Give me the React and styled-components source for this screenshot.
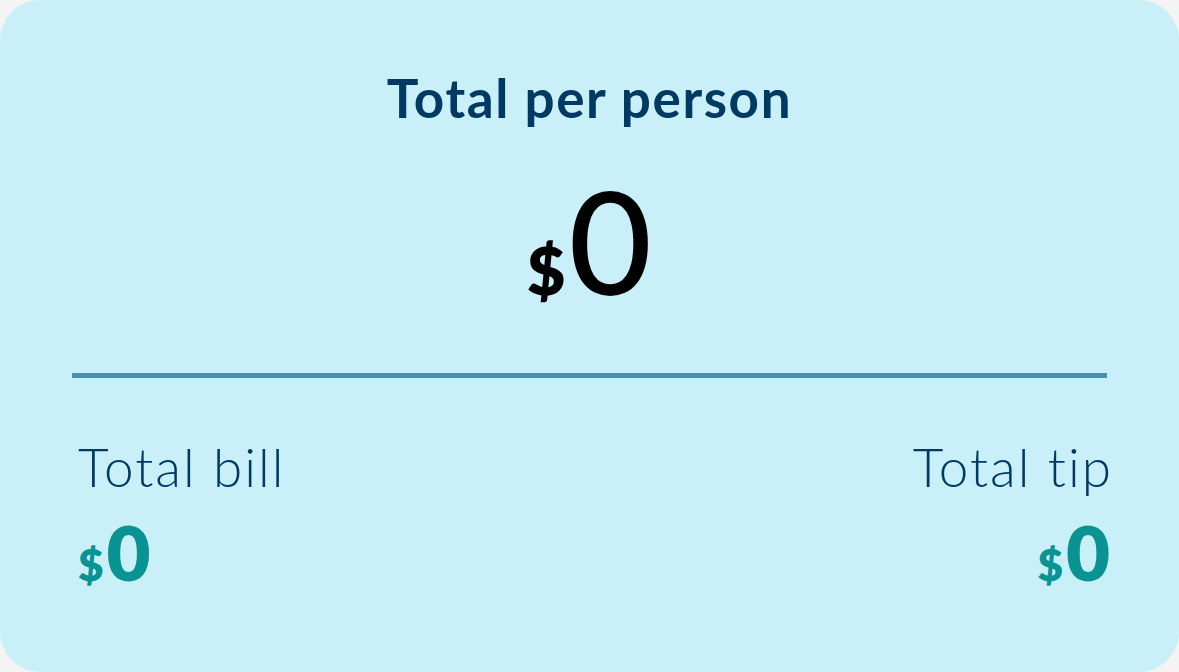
import React from 'react';
import styled, { createGlobalStyle } from 'styled-components';

const GlobalStyle = createGlobalStyle`
  html, body {
    margin: 0;
    padding: 0;
    background: #f4f4f4;
  }
  body {
    font-family: Lato, "Noto Sans", sans-serif;
  }
`;

function Amount({ value, size, signSize, color, weight }) {
  return (
    <AmountText $size={size} $color={color} $weight={weight}>
      <Sign $size={signSize}>$</Sign>
      {value}
    </AmountText>
  );
}

export default function App() {
  return (
    <>
      <GlobalStyle />
      <Card>
        <Header>
          <Title>Total per person</Title>
          <Amount value="0" size={144} signSize={66} color="#000" weight={500} />
        </Header>
        <Divider />
        <Totals>
          <TotalItem>
            <TotalLabel>Total bill</TotalLabel>
            <Amount value="0" size={76} signSize={44} color="#0a9393" weight={800} />
          </TotalItem>
          <TotalItem $right>
            <TotalLabel $right>Total tip</TotalLabel>
            <Amount value="0" size={76} signSize={44} color="#0a9393" weight={800} />
          </TotalItem>
        </Totals>
      </Card>
    </>
  );
}

const Card = styled.main`
  box-sizing: border-box;
  width: 1179px;
  height: 672px;
  background: #c9f0f8;
  border-radius: 40px;
  padding: 62px 72px 0;
  display: flex;
  flex-direction: column;
`;

const Header = styled.section`
  display: flex;
  flex-direction: column;
  align-items: center;
  gap: 20px;
`;

const Title = styled.h1`
  margin: 0;
  font-size: 53px;
  line-height: 72px;
  font-weight: 700;
  letter-spacing: 1.6px;
  color: #003a63;
`;

const AmountText = styled.div`
  font-size: ${(p) => p.$size}px;
  font-weight: ${(p) => p.$weight};
  color: ${(p) => p.$color};
  line-height: 1.2;
`;

const Sign = styled.span`
  font-size: ${(p) => p.$size}px;
  font-weight: 800;
  margin-right: 3px;
`;

const Divider = styled.hr`
  margin: 46px 0 0;
  border: 0;
  height: 5px;
  background: #4a8fae;
`;

const Totals = styled.section`
  display: flex;
  justify-content: space-between;
  padding: 57px 0 0 6px;
  margin-right: -3px;
`;

const TotalItem = styled.div`
  display: flex;
  flex-direction: column;
  align-items: ${(p) => (p.$right ? 'flex-end' : 'flex-start')};
  gap: 7px;
`;

const TotalLabel = styled.div`
  font-size: 53px;
  font-weight: 300;
  line-height: 64px;
  letter-spacing: 2px;
  color: #003a63;
  margin-right: ${(p) => (p.$right ? '-3px' : '0')};
`;
